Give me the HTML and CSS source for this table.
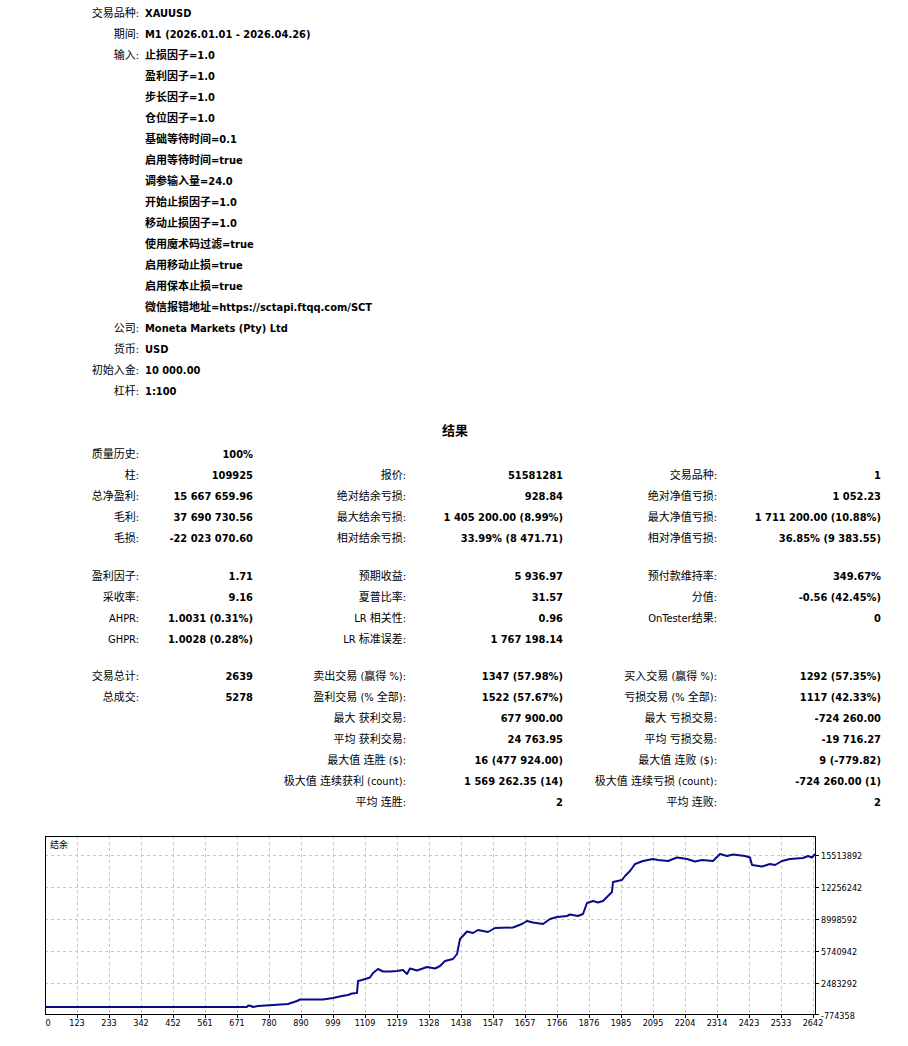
FILE: index.html
```html
<!DOCTYPE html>
<html lang="zh-CN">
<head>
<meta charset="utf-8">
<title>策略测试报告</title>
<link rel="stylesheet" href="styles.css">
</head>
<body>
<div class="page">
  <section class="settings">
    <div class="lbl">交易品种:</div><div class="val">XAUUSD</div>
    <div class="lbl">期间:</div><div class="val">M1 (2026.01.01 - 2026.04.26)</div>
    <div class="lbl">输入:</div><div class="val">止损因子=1.0</div>
    <div class="lbl"></div><div class="val">盈利因子=1.0</div>
    <div class="lbl"></div><div class="val">步长因子=1.0</div>
    <div class="lbl"></div><div class="val">仓位因子=1.0</div>
    <div class="lbl"></div><div class="val">基础等待时间=0.1</div>
    <div class="lbl"></div><div class="val">启用等待时间=true</div>
    <div class="lbl"></div><div class="val">调参输入量=24.0</div>
    <div class="lbl"></div><div class="val">开始止损因子=1.0</div>
    <div class="lbl"></div><div class="val">移动止损因子=1.0</div>
    <div class="lbl"></div><div class="val">使用魔术码过滤=true</div>
    <div class="lbl"></div><div class="val">启用移动止损=true</div>
    <div class="lbl"></div><div class="val">启用保本止损=true</div>
    <div class="lbl"></div><div class="val">微信报错地址=https://sctapi.ftqq.com/SCT</div>
    <div class="lbl">公司:</div><div class="val">Moneta Markets (Pty) Ltd</div>
    <div class="lbl">货币:</div><div class="val">USD</div>
    <div class="lbl">初始入金:</div><div class="val">10 000.00</div>
    <div class="lbl">杠杆:</div><div class="val">1:100</div>
  </section>

  <h2 class="title">结果</h2>

  <section class="results">
    <div class="lbl">质量历史:</div><div class="val">100%</div><div class="lbl"></div><div class="val"></div><div class="lbl"></div><div class="val"></div>
    <div class="lbl">柱:</div><div class="val">109925</div><div class="lbl">报价:</div><div class="val">51581281</div><div class="lbl">交易品种:</div><div class="val">1</div>
    <div class="lbl">总净盈利:</div><div class="val">15 667 659.96</div><div class="lbl">绝对结余亏损:</div><div class="val">928.84</div><div class="lbl">绝对净值亏损:</div><div class="val">1 052.23</div>
    <div class="lbl">毛利:</div><div class="val">37 690 730.56</div><div class="lbl">最大结余亏损:</div><div class="val">1 405 200.00 (8.99%)</div><div class="lbl">最大净值亏损:</div><div class="val">1 711 200.00 (10.88%)</div>
    <div class="lbl">毛损:</div><div class="val">-22 023 070.60</div><div class="lbl">相对结余亏损:</div><div class="val">33.99% (8 471.71)</div><div class="lbl">相对净值亏损:</div><div class="val">36.85% (9 383.55)</div>
  </section>

  <section class="results">
    <div class="lbl">盈利因子:</div><div class="val">1.71</div><div class="lbl">预期收益:</div><div class="val">5 936.97</div><div class="lbl">预付款维持率:</div><div class="val">349.67%</div>
    <div class="lbl">采收率:</div><div class="val">9.16</div><div class="lbl">夏普比率:</div><div class="val">31.57</div><div class="lbl">分值:</div><div class="val">-0.56 (42.45%)</div>
    <div class="lbl">AHPR:</div><div class="val">1.0031 (0.31%)</div><div class="lbl">LR 相关性:</div><div class="val">0.96</div><div class="lbl">OnTester结果:</div><div class="val">0</div>
    <div class="lbl">GHPR:</div><div class="val">1.0028 (0.28%)</div><div class="lbl">LR 标准误差:</div><div class="val">1 767 198.14</div><div class="lbl"></div><div class="val"></div>
  </section>

  <section class="results">
    <div class="lbl">交易总计:</div><div class="val">2639</div><div class="lbl">卖出交易 (赢得 %):</div><div class="val">1347 (57.98%)</div><div class="lbl">买入交易 (赢得 %):</div><div class="val">1292 (57.35%)</div>
    <div class="lbl">总成交:</div><div class="val">5278</div><div class="lbl">盈利交易 (% 全部):</div><div class="val">1522 (57.67%)</div><div class="lbl">亏损交易 (% 全部):</div><div class="val">1117 (42.33%)</div>
    <div class="lbl"></div><div class="val"></div><div class="lbl">最大 获利交易:</div><div class="val">677 900.00</div><div class="lbl">最大 亏损交易:</div><div class="val">-724 260.00</div>
    <div class="lbl"></div><div class="val"></div><div class="lbl">平均 获利交易:</div><div class="val">24 763.95</div><div class="lbl">平均 亏损交易:</div><div class="val">-19 716.27</div>
    <div class="lbl"></div><div class="val"></div><div class="lbl">最大值 连胜 ($):</div><div class="val">16 (477 924.00)</div><div class="lbl">最大值 连败 ($):</div><div class="val">9 (-779.82)</div>
    <div class="lbl"></div><div class="val"></div><div class="lbl">极大值 连续获利 (count):</div><div class="val">1 569 262.35 (14)</div><div class="lbl">极大值 连续亏损 (count):</div><div class="val">-724 260.00 (1)</div>
    <div class="lbl"></div><div class="val"></div><div class="lbl">平均 连胜:</div><div class="val">2</div><div class="lbl">平均 连败:</div><div class="val">2</div>
  </section>

  <div class="chart">
    <svg class="chart-svg" width="908" height="216" viewBox="0 830 908 216" xmlns="http://www.w3.org/2000/svg">
      <g class="grid">
        <line x1="45" y1="856" x2="816" y2="856"/>
        <line x1="45" y1="888" x2="816" y2="888"/>
        <line x1="45" y1="920" x2="816" y2="920"/>
        <line x1="45" y1="952" x2="816" y2="952"/>
        <line x1="45" y1="984" x2="816" y2="984"/>
        <line x1="77" y1="837" x2="77" y2="1016"/>
        <line x1="109" y1="837" x2="109" y2="1016"/>
        <line x1="141" y1="837" x2="141" y2="1016"/>
        <line x1="173" y1="837" x2="173" y2="1016"/>
        <line x1="205" y1="837" x2="205" y2="1016"/>
        <line x1="237" y1="837" x2="237" y2="1016"/>
        <line x1="269" y1="837" x2="269" y2="1016"/>
        <line x1="301" y1="837" x2="301" y2="1016"/>
        <line x1="333" y1="837" x2="333" y2="1016"/>
        <line x1="365" y1="837" x2="365" y2="1016"/>
        <line x1="397" y1="837" x2="397" y2="1016"/>
        <line x1="429" y1="837" x2="429" y2="1016"/>
        <line x1="461" y1="837" x2="461" y2="1016"/>
        <line x1="493" y1="837" x2="493" y2="1016"/>
        <line x1="525" y1="837" x2="525" y2="1016"/>
        <line x1="557" y1="837" x2="557" y2="1016"/>
        <line x1="589" y1="837" x2="589" y2="1016"/>
        <line x1="621" y1="837" x2="621" y2="1016"/>
        <line x1="653" y1="837" x2="653" y2="1016"/>
        <line x1="685" y1="837" x2="685" y2="1016"/>
        <line x1="717" y1="837" x2="717" y2="1016"/>
        <line x1="749" y1="837" x2="749" y2="1016"/>
        <line x1="781" y1="837" x2="781" y2="1016"/>
        <line x1="813" y1="837" x2="813" y2="1016"/>
      </g>
      <rect class="frame" x="45.5" y="837.5" width="770" height="178"/>
      <g class="ticks">
        <line x1="816" y1="856.5" x2="819" y2="856.5"/>
        <line x1="816" y1="888.5" x2="819" y2="888.5"/>
        <line x1="816" y1="920.5" x2="819" y2="920.5"/>
        <line x1="816" y1="952.5" x2="819" y2="952.5"/>
        <line x1="816" y1="984.5" x2="819" y2="984.5"/>
        <line x1="816" y1="1015.5" x2="819" y2="1015.5"/>
        <line x1="77.5" y1="1016" x2="77.5" y2="1019"/>
        <line x1="109.5" y1="1016" x2="109.5" y2="1019"/>
        <line x1="141.5" y1="1016" x2="141.5" y2="1019"/>
        <line x1="173.5" y1="1016" x2="173.5" y2="1019"/>
        <line x1="205.5" y1="1016" x2="205.5" y2="1019"/>
        <line x1="237.5" y1="1016" x2="237.5" y2="1019"/>
        <line x1="269.5" y1="1016" x2="269.5" y2="1019"/>
        <line x1="301.5" y1="1016" x2="301.5" y2="1019"/>
        <line x1="333.5" y1="1016" x2="333.5" y2="1019"/>
        <line x1="365.5" y1="1016" x2="365.5" y2="1019"/>
        <line x1="397.5" y1="1016" x2="397.5" y2="1019"/>
        <line x1="429.5" y1="1016" x2="429.5" y2="1019"/>
        <line x1="461.5" y1="1016" x2="461.5" y2="1019"/>
        <line x1="493.5" y1="1016" x2="493.5" y2="1019"/>
        <line x1="525.5" y1="1016" x2="525.5" y2="1019"/>
        <line x1="557.5" y1="1016" x2="557.5" y2="1019"/>
        <line x1="589.5" y1="1016" x2="589.5" y2="1019"/>
        <line x1="621.5" y1="1016" x2="621.5" y2="1019"/>
        <line x1="653.5" y1="1016" x2="653.5" y2="1019"/>
        <line x1="685.5" y1="1016" x2="685.5" y2="1019"/>
        <line x1="717.5" y1="1016" x2="717.5" y2="1019"/>
        <line x1="749.5" y1="1016" x2="749.5" y2="1019"/>
        <line x1="781.5" y1="1016" x2="781.5" y2="1019"/>
        <line x1="813.5" y1="1016" x2="813.5" y2="1019"/>
      </g>
      <polyline class="curve" points="46,1008 247,1008 248,1006.5 251,1007 253,1008 258,1007 273,1006 288,1005 294,1003 297,1002 300,1000.5 323,1000.5 333,999 342,997 348,996 352,994.5 357,994 358,982 362,981 370,978.5 373,974 378,970 383,972.5 390,972.5 397,972 403,971 407,975 410,969.5 417,971.5 427,968 435,969.5 440,967 445,962 453,960 457,955 459,945 460,940 467,932.5 473,934 478,931 488,933 495,929 513,928.5 522,925 527,922 533,923.5 543,925 550,920 557,918 567,917 570,915.5 578,917 583,915 587,904 593,902 598,903.5 603,902 607,898 612,893 613,883 622,881 625,877 630,872 635,865 643,862 653,860 658,861 668,862 677,858.5 687,860 695,862.5 702,861 713,862 720,855 727,857 733,855.5 745,857 750,858.5 752,866 762,867.5 770,865 775,866 782,862 790,860 803,859 808,857 812,858.5 815,855"/>
      <text class="legend" x="50" y="849">结余</text>
      <g class="ylabels">
        <text x="821" y="859.5">15513892</text>
        <text x="821" y="891.5">12256242</text>
        <text x="821" y="923.5">8998592</text>
        <text x="821" y="955.5">5740942</text>
        <text x="821" y="987.5">2483292</text>
        <text x="821" y="1019.5">-774358</text>
      </g>
      <g class="xlabels">
        <text x="48" y="1027">0</text>
        <text x="77" y="1027">123</text>
        <text x="109" y="1027">233</text>
        <text x="141" y="1027">342</text>
        <text x="173" y="1027">452</text>
        <text x="205" y="1027">561</text>
        <text x="237" y="1027">671</text>
        <text x="269" y="1027">780</text>
        <text x="301" y="1027">890</text>
        <text x="333" y="1027">999</text>
        <text x="365" y="1027">1109</text>
        <text x="397" y="1027">1219</text>
        <text x="429" y="1027">1328</text>
        <text x="461" y="1027">1438</text>
        <text x="493" y="1027">1547</text>
        <text x="525" y="1027">1657</text>
        <text x="557" y="1027">1766</text>
        <text x="589" y="1027">1876</text>
        <text x="621" y="1027">1985</text>
        <text x="653" y="1027">2095</text>
        <text x="685" y="1027">2204</text>
        <text x="717" y="1027">2314</text>
        <text x="749" y="1027">2423</text>
        <text x="781" y="1027">2533</text>
        <text x="813" y="1027">2642</text>
      </g>
    </svg>
  </div>
</div>
</body>
</html>
```
FILE: styles.css
```css
html, body {
  margin: 0;
  padding: 0;
  background: #ffffff;
}

body {
  font-family: "DejaVu Sans Condensed", "DejaVu Sans", "Noto Sans CJK SC", sans-serif;
  font-stretch: condensed;
  font-size: 11px;
  color: #000000;
}

.page {
  width: 908px;
  padding-top: 3px;
}

.settings {
  display: grid;
  grid-template-columns: 139px 1fr;
  column-gap: 6px;
  grid-auto-rows: 21px;
  line-height: 21px;
}

.settings .lbl {
  text-align: right;
  white-space: nowrap;
}

.settings .val {
  font-weight: bold;
  white-space: nowrap;
}

.title {
  margin: 19px 0 3px;
  height: 20px;
  line-height: 20px;
  font-size: 13px;
  font-weight: bold;
  text-align: center;
  padding-left: 2px;
}

.results {
  display: grid;
  grid-template-columns: 139px 114px 153px 157px 154px 164px;
  grid-auto-rows: 21px;
  line-height: 21px;
}

.results + .results {
  margin-top: 16.5px;
}

.results .lbl {
  text-align: right;
  white-space: nowrap;
}

.results .val {
  text-align: right;
  font-weight: bold;
  white-space: nowrap;
}

.chart {
  margin-top: 16px;
}

.chart-svg {
  display: block;
}

.grid line {
  stroke: #c8c8c8;
  stroke-width: 1;
  stroke-dasharray: 3 3;
  shape-rendering: crispEdges;
}

.frame {
  fill: none;
  stroke: #000000;
  stroke-width: 1;
  shape-rendering: crispEdges;
}

.ticks line {
  stroke: #000000;
  stroke-width: 1;
  shape-rendering: crispEdges;
}

.curve {
  fill: none;
  stroke: #0a0a8a;
  stroke-width: 2;
  stroke-linejoin: round;
}

.legend {
  font-size: 9px;
  fill: #000000;
}

.ylabels text {
  font-size: 9px;
  fill: #000000;
}

.xlabels text {
  font-size: 9px;
  fill: #000000;
  text-anchor: middle;
}
```
